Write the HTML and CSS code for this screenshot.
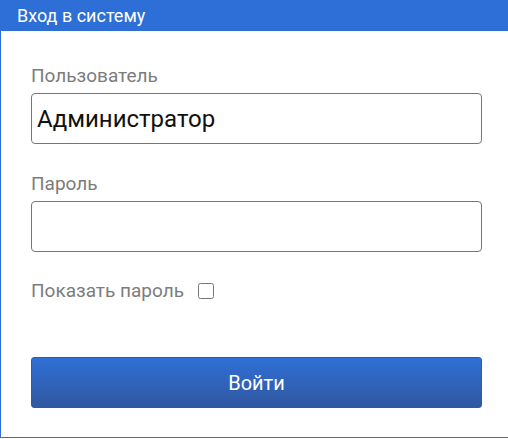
FILE: index.html
```html
<!DOCTYPE html>
<html lang="ru">
<head>
<meta charset="utf-8">
<title>Вход в систему</title>
<link rel="stylesheet" href="styles.css">
</head>
<body>
<div class="panel">
  <div class="panel-header">Вход в систему</div>
  <form class="login-form">
    <label class="field-label" for="user">Пользователь</label>
    <input class="text-input" id="user" type="text" value="Администратор">
    <label class="field-label field-label-second" for="pass">Пароль</label>
    <input class="text-input" id="pass" type="password">
    <div class="show-row">
      <label class="show-label" for="show">Показать пароль</label>
      <input class="show-check" id="show" type="checkbox">
    </div>
    <button class="submit-btn" type="button">Войти</button>
  </form>
</div>
</body>
</html>
```
FILE: styles.css
```css
html, body {
  margin: 0;
  padding: 0;
  background: #ffffff;
}
body {
  font-family: Roboto, "Liberation Sans", Arial, sans-serif;
}
.panel {
  width: 508px;
  height: 438px;
  box-sizing: border-box;
  border-left: 1px solid #2d6fd6;
  border-bottom: 1px solid #2d6fd6;
  display: flex;
  flex-direction: column;
}
.panel-header {
  height: 31px;
  margin-left: -1px;
  background: #2d6fd6;
  color: #ffffff;
  font-size: 18px;
  line-height: 31px;
  padding-left: 17px;
  box-sizing: border-box;
}
.login-form {
  display: flex;
  flex-direction: column;
  padding: 34px 26px 0 30px;
}
.field-label {
  font-size: 19px;
  line-height: 21px;
  color: #7c7c7c;
}
.field-label-second {
  margin-top: 29px;
}
.text-input {
  margin-top: 7px;
  height: 51px;
  box-sizing: border-box;
  border: 1px solid #767676;
  border-radius: 4px;
  padding: 0 5px;
  font-family: Roboto, "Liberation Sans", Arial, sans-serif;
  font-size: 24px;
  color: #111111;
  outline: none;
}
.show-row {
  display: flex;
  align-items: center;
  margin-top: 28px;
  height: 21px;
}
.show-label {
  font-size: 19px;
  line-height: 21px;
  color: #7c7c7c;
}
.show-check {
  margin: 0 0 0 14px;
  width: 16px;
  height: 16px;
}
.submit-btn {
  margin-top: 56px;
  height: 51px;
  border: 1px solid #2f5aa6;
  border-radius: 3px;
  background: linear-gradient(#2f70d6, #3157a0);
  color: #ffffff;
  font-family: Roboto, "Liberation Sans", Arial, sans-serif;
  font-size: 20px;
}
```
